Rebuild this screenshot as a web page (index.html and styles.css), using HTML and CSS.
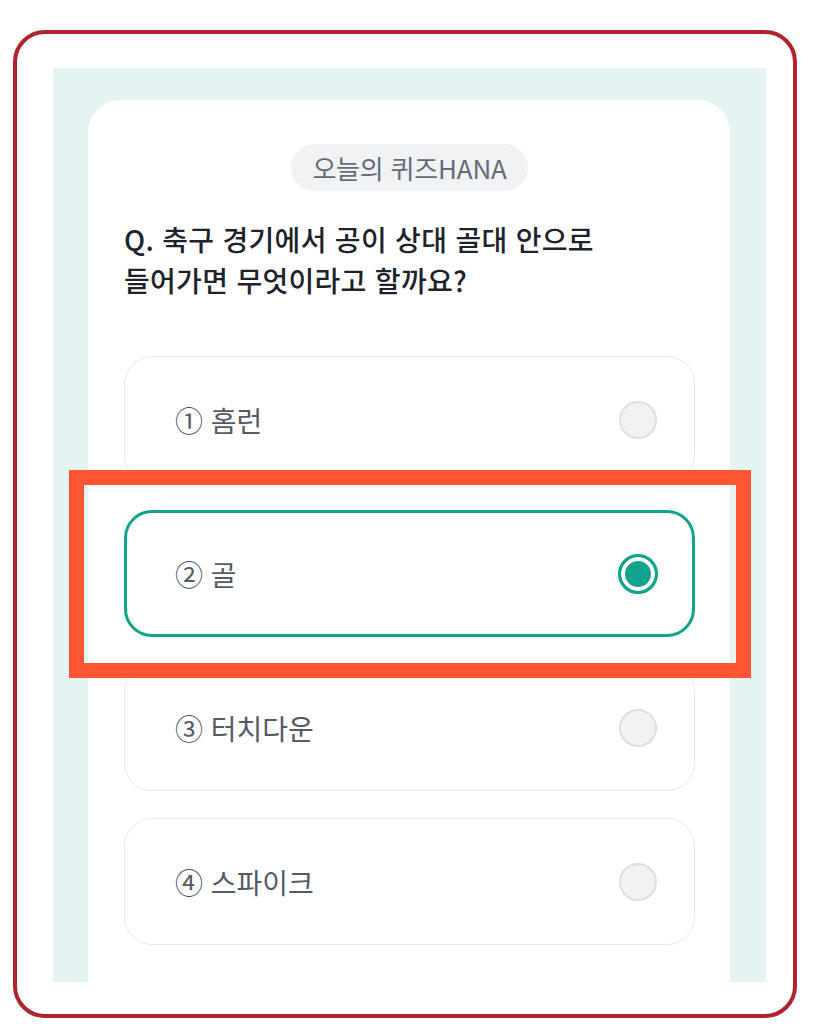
FILE: index.html
```html
<!DOCTYPE html>
<html lang="ko">
<head>
    <meta charset="UTF-8">
    <meta name="viewport" content="width=device-width, initial-scale=1.0">
    <title>오늘의 퀴즈HANA</title>
    <link rel="stylesheet" href="styles.css">
</head>
<body>
    <div class="frame">
        <div class="screen">
            <div class="quiz-card">
                <div class="chip-row">
                    <span class="chip">오늘의 퀴즈HANA</span>
                </div>
                <h2 class="question">Q. 축구 경기에서 공이 상대 골대 안으로<br>들어가면 무엇이라고 할까요?</h2>
                <div class="options">
                    <div class="option">
                        <span class="option-label">① 홈런</span>
                        <span class="radio"></span>
                    </div>
                    <div class="option selected">
                        <span class="option-label">② 골</span>
                        <span class="radio"></span>
                    </div>
                    <div class="option">
                        <span class="option-label">③ 터치다운</span>
                        <span class="radio"></span>
                    </div>
                    <div class="option">
                        <span class="option-label">④ 스파이크</span>
                        <span class="radio"></span>
                    </div>
                </div>
            </div>
        </div>
        <div class="highlight"></div>
    </div>
</body>
</html>
```

FILE: styles.css
```css
body {
    margin: 0;
    background-color: #fff;
    font-family: "Noto Sans CJK KR", "Noto Sans", sans-serif;
}

.frame {
    position: relative;
    box-sizing: border-box;
    width: 784px;
    height: 988px;
    margin: 30px 0 0 13px;
    padding: 34px 27px 32px 36px;
    border: 4px solid #b2232a;
    border-radius: 32px;
}

.screen {
    box-sizing: border-box;
    height: 100%;
    padding: 32px 36px 0 35px;
    background-color: #e3f4f2;
    overflow: hidden;
}

.quiz-card {
    box-sizing: border-box;
    height: 100%;
    padding: 44px 35px 0 36px;
    background-color: #fff;
    border-radius: 32px 32px 0 0;
}

.chip-row {
    display: flex;
    justify-content: center;
}

.chip {
    height: 47px;
    padding: 0 21px;
    display: flex;
    align-items: center;
    background-color: #f1f2f4;
    border-radius: 24px;
    color: #656c78;
    font-size: 26px;
    letter-spacing: -0.2px;
}

.question {
    margin: 28px 0 0;
    color: #1e232b;
    font-size: 28px;
    font-weight: 500;
    line-height: 41px;
    letter-spacing: 0.3px;
}

.options {
    margin-top: 55px;
    display: flex;
    flex-direction: column;
    gap: 27px;
}

.option {
    box-sizing: border-box;
    height: 127px;
    padding: 0 37px 0 50px;
    display: flex;
    align-items: center;
    justify-content: space-between;
    border: 1px solid #e6e8eb;
    border-radius: 28px;
}

.option-label {
    color: #545b66;
    font-size: 28px;
}

.radio {
    box-sizing: border-box;
    width: 38px;
    height: 38px;
    border-radius: 50%;
    background-color: #f1f2f4;
    border: 2px solid #dcdfe3;
}

.option.selected {
    border: 3px solid #12a38c;
    padding: 0 35px 0 48px;
}

.option.selected .radio {
    width: 40px;
    height: 40px;
    margin-right: -1px;
    background-color: #12a38c;
    border: 3px solid #12a38c;
    box-shadow: inset 0 0 0 4px #fff;
}

/* annotation box over the selected answer */
.highlight {
    position: absolute;
    left: 52px;
    top: 436px;
    width: 682px;
    height: 208px;
    box-sizing: border-box;
    border: 15px solid #ff5533;
    background-color: transparent;
}
```
